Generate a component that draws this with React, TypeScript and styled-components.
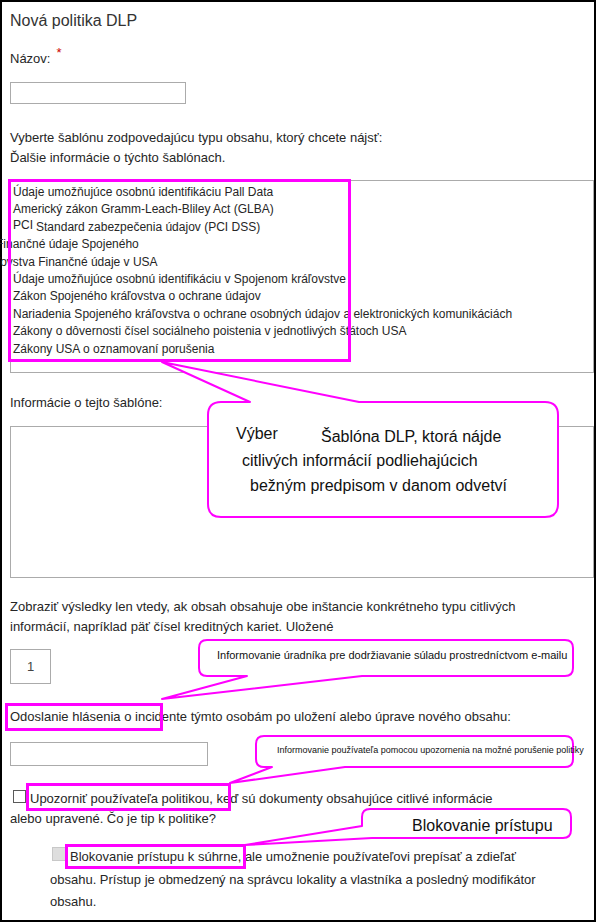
import React from 'react';
import styled, { createGlobalStyle } from 'styled-components';

const PINK = '#ff00ff';

const GlobalStyle = createGlobalStyle`
  html, body {
    margin: 0;
    padding: 0;
    background: #fff;
  }
  body {
    font-family: "Liberation Sans", Arial, sans-serif;
    color: #262626;
  }
`;

const templates = [
  'Údaje umožňujúce osobnú identifikáciu Pall Data',
  'Americký zákon Gramm-Leach-Bliley Act (GLBA)',
  'PCI',
  'Finančné údaje Spojeného',
  'kráľovstva Finančné údaje v USA',
  'Údaje umožňujúce osobnú identifikáciu v Spojenom kráľovstve',
  'Zákon Spojeného kráľovstva o ochrane údajov',
  'Nariadenia Spojeného kráľovstva o ochrane osobných údajov a elektronických komunikáciách',
  'Zákony o dôvernosti čísel sociálneho poistenia v jednotlivých štátoch USA',
  'Zákony USA o oznamovaní porušenia',
];

// balloon outlines, in page coordinates
const balloons = [
  'M221 402 L250 402 L162 362 L359 402 L545 402 Q558 402 558 415 L558 504 Q558 517 545 517 L221 517 Q208 517 208 504 L208 415 Q208 402 221 402 Z',
  'M207 640 L565 640 Q573 640 573 648 L573 668 Q573 676 565 676 L362 676 L162 699 L247 676 L207 676 Q199 676 199 668 L199 648 Q199 640 207 640 Z',
  'M264 736 L565 736 Q573 736 573 744 L573 759 Q573 767 565 767 L345 767 L230 783 L272 767 L264 767 Q256 767 256 759 L256 744 Q256 736 264 736 Z',
  'M370 809 L563 809 Q571 809 571 817 L571 830 Q571 838 563 838 L372 838 L245 845 L362 826 L362 817 Q362 809 370 809 Z',
];

const notes = [
  { x: 236, y: 423.5, size: 16, text: 'Výber' },
  { x: 321, y: 426.5, size: 16, text: 'Šablóna DLP, ktorá nájde' },
  { x: 242, y: 450.5, size: 16, text: 'citlivých informácií podliehajúcich' },
  { x: 250, y: 475.5, size: 16, text: 'bežným predpisom v danom odvetví' },
  { x: 217, y: 648, size: 11, text: 'Informovanie úradníka pre dodržiavanie súladu prostredníctvom e-mailu' },
  { x: 277, y: 745, size: 9, text: 'Informovanie používateľa pomocou upozornenia na možné porušenie politiky' },
  { x: 412, y: 815.5, size: 16, text: 'Blokovanie prístupu' },
];

function App() {
  return (
    <>
      <GlobalStyle />
      <Frame>
        <Title>Nová politika DLP</Title>

        <Text top={17.5}>
          Názov:<Required>*</Required>
        </Text>
        <Field top={13.5} width={176} height={22} />

        <Text top={23.5}>
          Vyberte šablónu zodpovedajúcu typu obsahu, ktorý chcete nájsť:
          <br />
          Ďalšie informácie o týchto šablónach.
        </Text>

        <ListBox>
          <ListHighlight>
            {templates.map((t, i) => {
              if (t === 'PCI') {
                return (
                  <ListItem key={i}>
                    <Raised>PCI</Raised>
                    <Gap>Standard zabezpečenia údajov (PCI DSS)</Gap>
                  </ListItem>
                );
              }
              const shift = i === 3 ? -17 : i === 4 ? -33 : 0;
              return (
                <ListItem key={i} shift={shift}>
                  {t}
                </ListItem>
              );
            })}
          </ListHighlight>
        </ListBox>

        <Text top={20}>Informácie o tejto šablóne:</Text>
        <Field top={13} height={152} wide />

        <Text top={18.5}>
          Zobraziť výsledky len vtedy, ak obsah obsahuje obe inštancie konkrétneho typu citlivých
          <br />
          informácií, napríklad päť čísel kreditných kariet. Uložené
        </Text>
        <CountBox>1</CountBox>

        <Text top={22.5}>
          <Mark box={[-5, -3.5, 158, 28]}>Odoslanie hlásenia o incidente</Mark> týmto osobám po uložení alebo úprave nového obsahu:
        </Text>
        <Field top={15.5} width={198} height={24} />

        <Text top={22.5}>
          <Check />
          <Mark box={[-4, -5.5, 205, 28]}>Upozorniť používateľa politikou,</Mark> keď sú dokumenty obsahujúce citlivé informácie
          <br />
          alebo upravené. Čo je tip k politike?
        </Text>

        <Indented>
          <Check disabled />
          <Mark box={[-5, -2, 181, 25]}>Blokovanie prístupu k súhrne,</Mark> ale umožnenie používateľovi prepísať a zdieľať
          <br />
          obsahu. Prístup je obmedzený na správcu lokality a vlastníka a posledný modifikátor
          <br />
          obsahu.
        </Indented>

        <Overlay>
          <svg width="596" height="922" viewBox="0 0 596 922">
            {balloons.map((d, i) => (
              <path key={i} d={d} fill="#fff" stroke={PINK} strokeWidth="2" strokeLinejoin="round" />
            ))}
          </svg>
          {notes.map((n, i) => (
            <Note key={i} x={n.x} y={n.y} size={n.size}>
              {n.text}
            </Note>
          ))}
        </Overlay>
      </Frame>
    </>
  );
}
export default App;


const Frame = styled.div`
  position: relative;
  box-sizing: border-box;
  width: 596px;
  height: 922px;
  border: 2px solid #000;
  padding: 9px 0 0 8px;
  font-size: 13px;
  line-height: 20px;
`;

const Title = styled.div`
  font-size: 16px;
  line-height: 20px;
  color: #333;
`;

const Text = styled.div<{ top: number }>`
  margin-top: ${props => props.top}px;
  white-space: nowrap;
`;

const Required = styled.span`
  position: relative;
  top: -6px;
  margin-left: 6px;
  color: #c00;
  font-size: 13px;
`;

const Field = styled.div<{ top: number; width?: number; height: number; wide?: boolean }>`
  box-sizing: border-box;
  margin-top: ${props => props.top}px;
  width: ${props => props.wide ? 'auto' : `${props.width}px`};
  height: ${props => props.height}px;
  border: 1px solid #ababab;
  background: #fff;
`;

const ListBox = styled.div`
  box-sizing: border-box;
  margin-top: 12.5px;
  height: 193px;
  border: 1px solid #ababab;
`;

const ListHighlight = styled.div`
  position: relative;
  box-sizing: border-box;
  width: 343px;
  height: 183px;
  margin: -2px 0 0 -3px;
  padding: 5px 0 0 5px;
  font-size: 12px;
  line-height: 17.4px;
  &::after {
    content: '';
    position: absolute;
    inset: 0;
    border: 3px solid ${PINK};
    z-index: 1;
  }
`;

const ListItem = styled.div<{ shift?: number }>`
  white-space: nowrap;
  margin-left: ${props => props.shift || 0}px;
`;

const Raised = styled.span`
  position: relative;
  top: -2px;
`;

const Gap = styled.span`
  margin-left: 3px;
`;

const CountBox = styled.div`
  box-sizing: border-box;
  display: flex;
  align-items: center;
  justify-content: center;
  margin-top: 12.5px;
  width: 41px;
  height: 35px;
  border: 1px solid #ababab;
  color: #444;
  font-size: 13px;
`;

const Mark = styled.span<{ box: number[] }>`
  position: relative;
  display: inline-block;
  &::after {
    content: '';
    position: absolute;
    box-sizing: border-box;
    left: ${props => props.box[0]}px;
    top: ${props => props.box[1]}px;
    width: ${props => props.box[2]}px;
    height: ${props => props.box[3]}px;
    border: 3px solid ${PINK};
    z-index: 1;
  }
`;

const Check = styled.span<{ disabled?: boolean }>`
  display: inline-block;
  box-sizing: border-box;
  width: ${props => props.disabled ? 14 : 13}px;
  height: ${props => props.disabled ? 14 : 13}px;
  margin: 0 4px 0 ${props => props.disabled ? 2 : 3}px;
  border: 1px solid ${props => props.disabled ? '#c8c8c8' : '#5a5a5a'};
  background: ${props => props.disabled ? '#dedede' : '#fff'};
  vertical-align: baseline;
`;

const Indented = styled.div`
  margin-top: 17.5px;
  padding-left: 40px;
  line-height: 22.5px;
  white-space: nowrap;
`;

const Overlay = styled.div`
  position: absolute;
  top: -2px;
  left: -2px;
  width: 596px;
  height: 922px;
  pointer-events: none;
  z-index: 2;
  svg {
    position: absolute;
    top: 0;
    left: 0;
  }
`;

const Note = styled.div<{ x: number; y: number; size: number }>`
  position: absolute;
  left: ${props => props.x}px;
  top: ${props => props.y}px;
  font-size: ${props => props.size}px;
  line-height: ${props => Math.round(props.size * 1.25)}px;
  white-space: nowrap;
  color: #111;
`;
